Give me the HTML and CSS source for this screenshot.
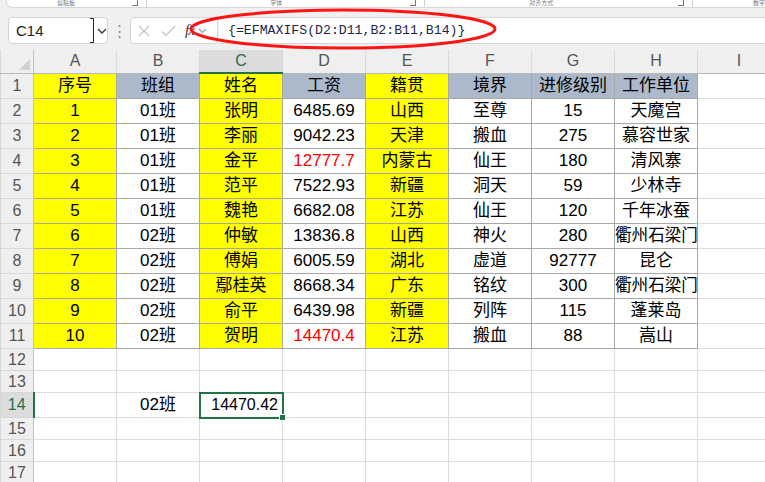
FILE: index.html
```html
<!DOCTYPE html>
<html lang="zh">
<head>
<meta charset="utf-8">
<link rel="stylesheet" href="styles.css">
</head>
<body>
<div class="ribbon">
  <span class="grp g1">剪贴板</span><span class="launch"></span><span class="sep"></span>
  <span class="grp g2">字体</span><span class="launch"></span><span class="sep"></span>
  <span class="grp g3">对齐方式</span><span class="launch"></span><span class="sep"></span>
  <span class="grp g4">数字</span>
</div>
<div class="fbar">
  <div class="namebox">
    <span class="ref">C14</span>
    <svg class="caret" width="6" height="27" viewBox="0 0 6 27"><path d="M0 1.5H3.5V25.5H0" fill="none" stroke="#222" stroke-width="1"/></svg>
    <svg class="chev" width="10" height="6" viewBox="0 0 10 6"><path d="M1 1L5 5L9 1" fill="none" stroke="#333" stroke-width="1.3"/></svg>
  </div>
  <div class="dots">⋮</div>
  <div class="fxbox">
    <svg width="12" height="12" viewBox="0 0 12 12"><path d="M1 1L11 11M11 1L1 11" stroke="#c4c4c4" stroke-width="1.2"/></svg>
    <svg width="15" height="12" viewBox="0 0 15 12"><path d="M1 6.5L5 10.5L14 1" fill="none" stroke="#c4c4c4" stroke-width="1.2"/></svg>
    <span class="fx">fx</span>
    <svg width="9" height="6" viewBox="0 0 9 6"><path d="M1 1L4.5 4.5L8 1" fill="none" stroke="#999" stroke-width="1.1"/></svg>
  </div>
  <div class="formula">{=EFMAXIFS(D2:D11,B2:B11,B14)}</div>
</div>
<svg class="ring" width="310" height="44" viewBox="0 0 310 44"><ellipse cx="155" cy="21" rx="152" ry="19" fill="none" stroke="#ff1414" stroke-width="3"/></svg>
<table class="sheet">
  <colgroup><col class="rh"><col><col><col><col><col><col><col><col><col></colgroup>
  <tr class="hdr"><th class="corner"><span class="tri"></span></th><th>A</th><th>B</th><th class="hsel">C</th><th>D</th><th>E</th><th>F</th><th>G</th><th>H</th><th>I</th></tr>
  <tr class="r"><th>1</th><td class="d y">序号</td><td class="d b">班组</td><td class="d y">姓名</td><td class="d b">工资</td><td class="d y">籍贯</td><td class="d b">境界</td><td class="d b">进修级别</td><td class="d b">工作单位</td><td></td></tr>
  <tr class="r"><th>2</th><td class="d y">1</td><td class="d">01班</td><td class="d y">张明</td><td class="d">6485.69</td><td class="d y">山西</td><td class="d">至尊</td><td class="d">15</td><td class="d">天魔宫</td><td></td></tr>
  <tr class="r"><th>3</th><td class="d y">2</td><td class="d">01班</td><td class="d y">李丽</td><td class="d">9042.23</td><td class="d y">天津</td><td class="d">搬血</td><td class="d">275</td><td class="d">慕容世家</td><td></td></tr>
  <tr class="r"><th>4</th><td class="d y">3</td><td class="d">01班</td><td class="d y">金平</td><td class="d red">12777.7</td><td class="d y">内蒙古</td><td class="d">仙王</td><td class="d">180</td><td class="d">清风寨</td><td></td></tr>
  <tr class="r"><th>5</th><td class="d y">4</td><td class="d">01班</td><td class="d y">范平</td><td class="d">7522.93</td><td class="d y">新疆</td><td class="d">洞天</td><td class="d">59</td><td class="d">少林寺</td><td></td></tr>
  <tr class="r"><th>6</th><td class="d y">5</td><td class="d">01班</td><td class="d y">魏艳</td><td class="d">6682.08</td><td class="d y">江苏</td><td class="d">仙王</td><td class="d">120</td><td class="d">千年冰蚕</td><td></td></tr>
  <tr class="r"><th>7</th><td class="d y">6</td><td class="d">02班</td><td class="d y">仲敏</td><td class="d">13836.8</td><td class="d y">山西</td><td class="d">神火</td><td class="d">280</td><td class="d wide">衢州石梁门</td><td></td></tr>
  <tr class="r"><th>8</th><td class="d y">7</td><td class="d">02班</td><td class="d y">傅娟</td><td class="d">6005.59</td><td class="d y">湖北</td><td class="d">虚道</td><td class="d">92777</td><td class="d">昆仑</td><td></td></tr>
  <tr class="r"><th>9</th><td class="d y">8</td><td class="d">02班</td><td class="d y">鄢桂英</td><td class="d">8668.34</td><td class="d y">广东</td><td class="d">铭纹</td><td class="d">300</td><td class="d wide">衢州石梁门</td><td></td></tr>
  <tr class="r"><th>10</th><td class="d y">9</td><td class="d">02班</td><td class="d y">俞平</td><td class="d">6439.98</td><td class="d y">新疆</td><td class="d">列阵</td><td class="d">115</td><td class="d">蓬莱岛</td><td></td></tr>
  <tr class="r"><th>11</th><td class="d y">10</td><td class="d">02班</td><td class="d y">贺明</td><td class="d red">14470.4</td><td class="d y">江苏</td><td class="d">搬血</td><td class="d">88</td><td class="d">嵩山</td><td></td></tr>
  <tr class="s"><th>12</th><td></td><td></td><td></td><td></td><td></td><td></td><td></td><td></td><td></td></tr>
  <tr class="s"><th>13</th><td></td><td></td><td></td><td></td><td></td><td></td><td></td><td></td><td></td></tr>
  <tr class="r"><th class="vsel">14</th><td></td><td>02班</td><td class="sel"><span class="num">14470.42</span><span class="handle"></span></td><td></td><td></td><td></td><td></td><td></td><td></td></tr>
  <tr class="s"><th>15</th><td></td><td></td><td></td><td></td><td></td><td></td><td></td><td></td><td></td></tr>
  <tr class="s"><th>16</th><td></td><td></td><td></td><td></td><td></td><td></td><td></td><td></td><td></td></tr>
  <tr class="s"><th>17</th><td></td><td></td><td></td><td></td><td></td><td></td><td></td><td></td><td></td></tr>
</table>
</body>
</html>
```

FILE: styles.css
```css
html, body {
  margin: 0;
  padding: 0;
}
body {
  width: 765px;
  height: 482px;
  overflow: hidden;
  position: relative;
  background: #f0f0f0;
  font-family: "Liberation Sans", "Noto Sans CJK SC", sans-serif;
}

/* ribbon remnant */
.ribbon {
  height: 7px;
  margin-left: 6px;
  background: #fff;
  border: 1px solid #d6d6d6;
  border-top: none;
  border-right: none;
  border-radius: 0 0 0 6px;
  display: flex;
  align-items: flex-end;
}
.grp {
  font-size: 6px;
  line-height: 7px;
  height: 7px;
  color: #777;
  white-space: nowrap;
}
.g1 { margin-left: 50px; width: 78px; }
.g2 { margin-left: 123px; width: 145px; }
.g3 { margin-left: 104px; width: 154px; }
.g4 { margin-left: 60px; }
.launch {
  width: 5px;
  height: 5px;
  border-right: 1px solid #777;
  border-bottom: 1px solid #777;
  margin-bottom: 1px;
}
.sep {
  width: 1px;
  height: 7px;
  background: #d0d0d0;
  margin-left: 8px;
}

/* formula bar */
.fbar {
  margin-top: 9px;
  height: 27px;
  display: flex;
  align-items: stretch;
  padding-left: 8px;
  margin-bottom: 6px;
}
.namebox {
  background: #fff;
  border: 1px solid #d3d3d3;
  border-radius: 4px;
  display: flex;
  align-items: center;
  box-sizing: border-box;
  width: 100px;
}
.ref {
  font-size: 15px;
  color: #222;
  margin-left: 7px;
  width: 74px;
}
.chev { margin-left: 1px; }
.dots {
  width: 22px;
  text-align: center;
  color: #8a8a8a;
  font-size: 15px;
  line-height: 27px;
}
.fxbox {
  width: 88px;
  box-sizing: border-box;
  background: #fff;
  border: 1px solid #d6d6d6;
  border-radius: 4px;
  display: flex;
  align-items: center;
  padding-left: 7px;
}
.fxbox svg:nth-child(1) { margin-right: 11px; }
.fxbox svg:nth-child(2) { margin-right: 9px; }
.fx {
  font-family: "Liberation Serif", serif;
  font-style: italic;
  font-size: 15px;
  color: #333;
  margin-right: 4px;
  letter-spacing: -1px;
}
.formula {
  flex: 1;
  background: #fff;
  border-top: 1px solid #d6d6d6;
  border-bottom: 1px solid #d6d6d6;
  font-family: "Liberation Mono", monospace;
  font-size: 13.2px;
  color: #1d2748;
  line-height: 25px;
  padding-left: 9px;
  margin-left: 1px;
  white-space: nowrap;
}
.ring {
  position: absolute;
  left: 188px;
  top: 8px;
}

/* sheet */
.sheet {
  border-collapse: collapse;
  table-layout: fixed;
  width: 780px;
  background: #fff;
}
col { width: 83px; }
col.rh { width: 33px; }
.sheet th, .sheet td {
  border: 1px solid #dcdcdc;
  padding: 0;
  white-space: nowrap;
  text-align: center;
  vertical-align: middle;
  font-size: 17px;
  line-height: 20px;
  color: #000;
}
.sheet td.wide {
  font-size: 16.6px;
  overflow: visible;
}
.sheet th {
  background: #efefef;
  font-weight: normal;
  font-size: 16px;
  color: #555;
  border-color: #d7d7d7;
  border-right-color: #c2c2c2;
}
.hdr th {
  height: 22px;
  border-bottom-color: #b9b9b9;
  border-right-color: #dadada;
  border-top: none;
}
.hdr th.corner {
  position: relative;
  border-right-color: #c2c2c2;
}
.tri {
  position: absolute;
  right: 3px;
  bottom: 3px;
  width: 0;
  height: 0;
  border-left: 11px solid transparent;
  border-bottom: 11px solid #d2d2d2;
}
.hdr th.hsel {
  background: #dcdcdc;
  color: #217346;
  border-bottom: 2px solid #217346;
}
th.vsel {
  background: #dcdcdc;
  color: #217346;
  border-right: 2px solid #217346;
}
tr.r td, tr.r th { height: 24px; }
tr.s td, tr.s th { height: 21px; }
td.d { border-color: #a8a8a8; }
td.y { background: #ffff00; }
td.b { background: #acb9ca; }
td.red { color: #ff0000; }
td.sel {
  position: relative;
  text-align: right;
  outline: 2px solid #217346;
  outline-offset: -1px;
}
.num {
  font-size: 16px;
  padding-right: 4px;
}
.handle {
  position: absolute;
  right: -4px;
  bottom: -4px;
  width: 5px;
  height: 5px;
  background: #217346;
  border: 1px solid #fff;
}
```
